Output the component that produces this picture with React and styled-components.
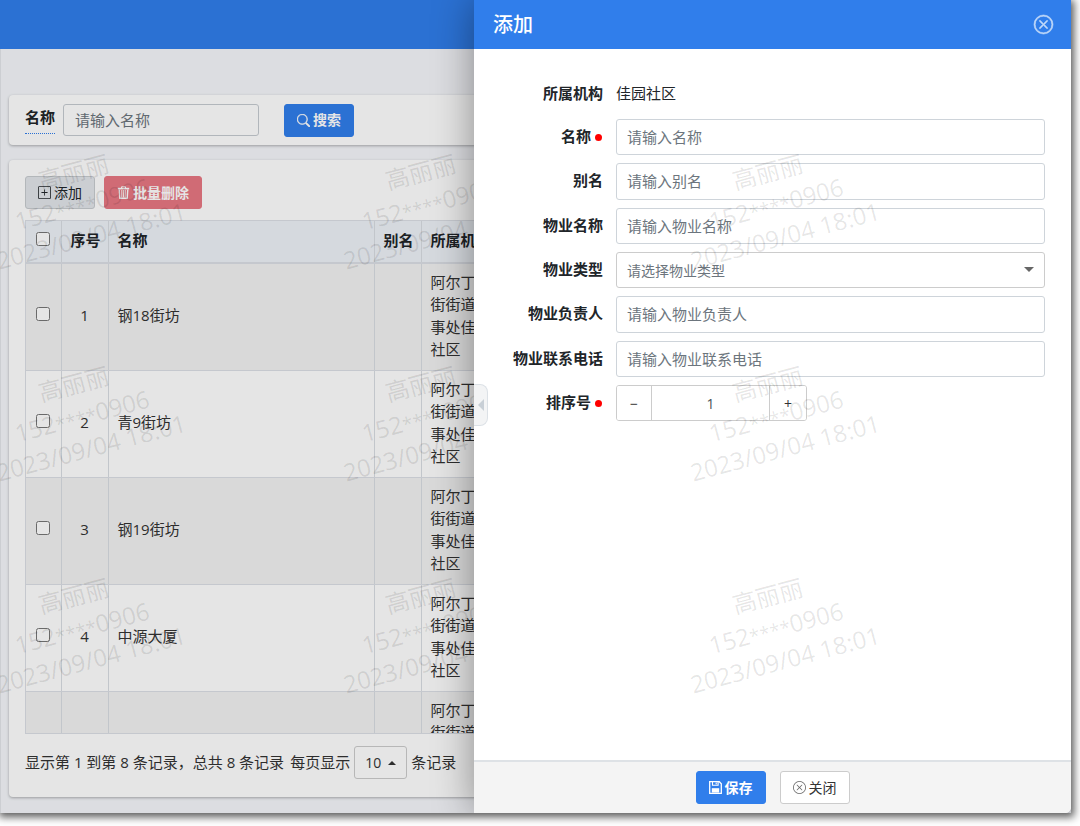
import React, { useState } from 'react';
import styled, { createGlobalStyle, css } from 'styled-components';
import { BsSearch, BsPlusSquare, BsXCircle } from 'react-icons/bs';

const Global = createGlobalStyle`
  * { box-sizing: border-box; }
  body {
    margin: 0;
    background: #fff;
    color: #212529;
    font: 15px/1.5 "Open Sans", "Noto Sans CJK SC", sans-serif;
  }
  button, input, select { font-family: inherit; margin: 0; }
`;

const Frame = styled.div`
  position: relative;
  display: flex;
  flex-direction: column;
  min-height: calc(100vh - 13px);
  margin: 0 9px 13px 0;
  overflow: hidden;
  background: #f5f7fb;
`;

const Shade = styled.div`
  display: flow-root;
  & > ${Frame} { box-shadow: 1px 2px 8px 2px rgba(0, 0, 0, 0.65); }
`;

const TopBar = styled.header`
  height: 49px;
  background: #307eeb;
`;

const Page = styled.main`
  flex: 1;
  display: flex;
  flex-direction: column;
  gap: 15px;
  padding: 46px 9px 16px 8px;
  border-left: 1px solid #e4e6ea;
`;

const Card = styled.section`
  background: #fff;
  border-radius: 4px;
  box-shadow: 0 1px 3px rgba(0, 0, 0, 0.3);
`;

const SearchCard = styled(Card)`
  display: flex;
  align-items: center;
  height: 50px;
  padding: 0 16px;
`;

const SearchLabel = styled.label`
  margin-right: 8px;
  padding-bottom: 4px;
  border-bottom: 1px dotted #307eeb;
  font-weight: 600;
`;

const fieldBox = css`
  border: 1px solid #ced4da;
  border-radius: 3px;
  background: #fff;
  color: #495057;
  font-size: 15px;
  line-height: 1.5;
  outline: none;
  &::placeholder { color: #6c757d; opacity: 1; }
`;

const SearchInput = styled.input`
  ${fieldBox}
  width: 196px;
  height: 32px;
  padding: 0 11px;
  margin-right: 25px;
  border-color: #c6cbd1;
`;

const variants = {
  primary: css`background: #307eeb; border-color: #307eeb; color: #fff; font-weight: 600;`,
  muted: css`background: #e2e6ea; border-color: #c8ccd0; color: #212529;`,
  danger: css`background: #e87883; border-color: #e87883; color: #fff; font-weight: 600;`,
  plain: css`background: #fff; border-color: #ccc; color: #333; svg { color: #666; }`,
};

const Button = styled.button`
  display: inline-flex;
  align-items: center;
  justify-content: center;
  gap: 3px;
  height: 33px;
  padding: 0 12px;
  border: 1px solid;
  border-radius: 3px;
  font-size: 14px;
  line-height: 20px;
  white-space: nowrap;
  ${(p) => variants[p.$variant]}
  svg { width: 13px; height: 13px; flex: none; }
`;

const ListCard = styled(Card)`
  flex: 1;
  display: flex;
  flex-direction: column;
  padding: 16px 16px 18px;
`;

const Toolbar = styled.div`
  display: flex;
  gap: 9px;
  margin-bottom: 11px;
`;

const TableWrap = styled.div`
  flex: 1 1 0;
  min-height: 0;
  overflow: hidden;
  border: 1px solid #dcdfe6;
`;

const Table = styled.table`
  width: 100%;
  border-collapse: collapse;
  table-layout: fixed;
  color: #333;
`;

const Th = styled.th`
  width: ${(p) => p.$w || 'auto'};
  padding: 8px 9px 10px;
  border-right: 1px solid #d9dde3;
  border-bottom: 2px solid #dcdfe6;
  background: #eef2f8;
  color: #212529;
  font-weight: 600;
  text-align: ${(p) => (p.$center ? 'center' : 'left')};
  white-space: nowrap;
`;

const Td = styled.td`
  padding: 7px 9px 9px;
  border-right: 1px solid #d9dde3;
  border-bottom: 1px solid #dcdfe6;
  text-align: ${(p) => (p.$center ? 'center' : 'left')};
`;

const Tr = styled.tr`
  &:nth-child(odd) { background: #f2f2f2; }
`;

const OrgLine = styled.div`
  white-space: nowrap;
`;

const Check = styled.input`
  display: block;
  width: 14px;
  height: 14px;
  && { margin: 0 auto 3px; }
`;

const Pager = styled.footer`
  display: flex;
  align-items: center;
  gap: 4px;
  margin-top: 12px;
  white-space: nowrap;
  color: #333;
`;

const Total = styled.span`
  margin-right: 2px;
`;

const PageSize = styled.button`
  display: flex;
  align-items: center;
  justify-content: center;
  gap: 7px;
  width: 53px;
  height: 33px;
  padding: 0;
  border: 1px solid #ccc;
  border-radius: 3px;
  background: #fff;
  color: #333;
  font-size: 14px;
`;

const CaretUp = styled.span`
  border: 4px solid transparent;
  border-top: 0;
  border-bottom-color: currentColor;
`;

const Backdrop = styled.div`
  position: absolute;
  inset: 0;
  background: rgba(0, 0, 0, 0.1);
`;

const Drawer = styled.aside`
  position: absolute;
  top: 0;
  right: 0;
  bottom: 0;
  left: 474px;
  display: flex;
  flex-direction: column;
  background: #fff;
  border-bottom-right-radius: 6px;
  box-shadow: 0 0 40px rgba(0, 0, 0, 0.4);
`;

const DrawerHead = styled.header`
  display: flex;
  align-items: center;
  justify-content: space-between;
  height: 49px;
  padding: 0 18px 0 19px;
  background: #307eeb;
  color: #fff;
`;

const Title = styled.h2`
  margin: 0;
  font-size: 20px;
  font-weight: 500;
  line-height: 28px;
`;

const CloseIcon = styled.button`
  display: flex;
  padding: 0;
  border: 0;
  background: none;
  color: #c3daf9;
  svg { width: 19px; height: 19px; stroke: currentColor; stroke-width: 0.5px; overflow: visible; }
`;

const Handle = styled.button`
  position: absolute;
  left: 0;
  top: 384px;
  display: flex;
  align-items: center;
  justify-content: center;
  width: 14px;
  height: 42px;
  padding: 0;
  border: 1px solid #dce1e6;
  border-left: 0;
  border-radius: 0 8px 8px 0;
  background: #f3f4f5;
`;

const CaretLeft = styled.span`
  border: 6px solid transparent;
  border-left: 0;
  border-right-color: #c8cfd6;
`;

const Form = styled.form`
  flex: 1;
  display: flex;
  flex-direction: column;
  gap: 8px;
  padding: 27px 26px 26px 0;
`;

const Row = styled.div`
  display: grid;
  grid-template-columns: 129px 1fr;
  column-gap: 13px;
  align-items: start;
`;

const Label = styled.label`
  display: flex;
  align-items: center;
  justify-content: flex-end;
  padding: 6px 0;
  font-weight: 600;
  white-space: nowrap;
`;

const Required = styled.i`
  width: 7px;
  height: 7px;
  margin: 3px 1px 0 4px;
  border-radius: 50%;
  background: #f00;
`;

const Value = styled.output`
  padding: 6px 0;
`;

const Field = styled.input`
  ${fieldBox}
  width: 100%;
  padding: 6px 10px;
`;

const SelectWrap = styled.div`
  position: relative;
`;

const Select = styled.select`
  ${fieldBox}
  appearance: none;
  display: block;
  width: 100%;
  height: 36px;
  padding: 0 30px 0 10px;
  border-color: #ccc;
  color: #6c757d;
  font-size: 14px;
`;

const CaretDown = styled.span`
  position: absolute;
  top: 15px;
  right: 11px;
  border: 5px solid transparent;
  border-bottom: 0;
  border-top-color: #666;
  pointer-events: none;
`;

const Stepper = styled.div`
  display: grid;
  grid-template-columns: 34px 1fr 36px;
  width: 191px;
  height: 36px;
  border: 1px solid #ccc;
  border-radius: 3px;
  overflow: hidden;
`;

const StepButton = styled.button`
  padding: 0;
  border: 0;
  background: #fff;
  color: #333;
  font-size: 14px;
`;

const StepValue = styled.input`
  width: 100%;
  min-width: 0;
  padding: 0;
  border: solid #ccc;
  border-width: 0 1px;
  color: #495057;
  font-size: 14px;
  text-align: center;
`;

const DrawerFoot = styled.footer`
  display: flex;
  justify-content: center;
  gap: 14px;
  padding: 9px 0;
  border-top: 2px solid #dee2e6;
  border-bottom-right-radius: 6px;
  background: #f4f4f4;
`;

const Marks = styled.div`
  position: absolute;
  top: 154px;
  left: ${(p) => p.$left};
  display: grid;
  grid-template-columns: repeat(${(p) => p.$columns}, 194px);
  gap: 113px 153px;
  pointer-events: none;
`;

const Mark = styled.div`
  transform: rotate(-15deg);
  color: rgba(0, 0, 0, 0.1);
  font-size: 24px;
  line-height: 33px;
  text-align: center;
  white-space: nowrap;
`;

const Stars = styled.span`
  font-size: 19px;
  line-height: 0;
`;

const org = ['阿尔丁', '街街道', '事处佳', '社区'];
const rows = [
  { no: 1, name: '钢18街坊' },
  { no: 2, name: '青9街坊' },
  { no: 3, name: '钢19街坊' },
  { no: 4, name: '中源大厦' },
];

function TrashIcon() {
  return (
    <svg viewBox="0 0 13 13" fill="none" stroke="currentColor" aria-hidden="true">
      <path d="M4.5 2V.8h4V2" />
      <path d="M.8 2.6h11.4" strokeWidth="1.6" />
      <path d="M2.2 3.5l.6 8.7h7.4l.6-8.7" strokeWidth="1.4" />
      <path d="M4.8 4v7.5M6.5 4v7.5M8.2 4v7.5" strokeWidth=".9" />
    </svg>
  );
}

function SaveIcon() {
  return (
    <svg viewBox="0 0 13 13" fill="none" stroke="currentColor" aria-hidden="true">
      <path d="M.7.7h9.6l2 2v9.6H.7z" strokeWidth="1.3" />
      <path d="M3.5.7v3.6h5.6V.7M7.2 1.5v1.7" strokeWidth="1.1" />
      <path d="M2.8 7.2h7.4v4.4H2.8z" fill="currentColor" stroke="none" />
    </svg>
  );
}

function Watermarks({ columns, left }) {
  return (
    <Marks $columns={columns} $left={left} aria-hidden="true">
      {Array.from({ length: columns * 3 }, (_, i) => (
        <Mark key={i}>
          <div>高丽丽</div>
          <div>152<Stars>****</Stars>0906</div>
          <div>2023/09/04 18:01</div>
        </Mark>
      ))}
    </Marks>
  );
}

function TextRow({ id, label, required }) {
  return (
    <Row>
      <Label htmlFor={id}>{label}{required && <Required />}</Label>
      <Field id={id} placeholder={`请输入${label}`} />
    </Row>
  );
}

export default function App() {
  const [order, setOrder] = useState(1);
  return (
    <Shade>
      <Global />
      <Frame>
        <TopBar />
        <Page>
          <SearchCard>
            <SearchLabel htmlFor="q">名称</SearchLabel>
            <SearchInput id="q" placeholder="请输入名称" />
            <Button $variant="primary"><BsSearch strokeWidth="0.5" />搜索</Button>
          </SearchCard>
          <ListCard>
            <Toolbar>
              <Button $variant="muted"><BsPlusSquare />添加</Button>
              <Button $variant="danger"><TrashIcon />批量删除</Button>
            </Toolbar>
            <TableWrap>
              <Table>
                <thead>
                  <tr>
                    <Th $w="35px"><Check type="checkbox" aria-label="全选" /></Th>
                    <Th $w="47px" $center>序号</Th>
                    <Th $w="266px">名称</Th>
                    <Th $w="47px" $center>别名</Th>
                    <Th>所属机构</Th>
                  </tr>
                </thead>
                <tbody>
                  {rows.map((r) => (
                    <Tr key={r.no}>
                      <Td><Check type="checkbox" aria-label={r.name} /></Td>
                      <Td $center>{r.no}</Td>
                      <Td>{r.name}</Td>
                      <Td />
                      <Td>{org.map((t) => <OrgLine key={t}>{t}</OrgLine>)}</Td>
                    </Tr>
                  ))}
                  <Tr>
                    <Td /><Td /><Td /><Td />
                    <Td>{org.slice(0, 2).map((t) => <OrgLine key={t}>{t}</OrgLine>)}</Td>
                  </Tr>
                </tbody>
              </Table>
            </TableWrap>
            <Pager>
              <Total>显示第 1 到第 8 条记录，总共 8 条记录</Total>
              <span>每页显示</span>
              <PageSize>10<CaretUp /></PageSize>
              <span>条记录</span>
            </Pager>
          </ListCard>
        </Page>
        <Backdrop />
        <Watermarks columns={2} left="-15px" />
        <Drawer>
          <DrawerHead>
            <Title>添加</Title>
            <CloseIcon aria-label="关闭"><BsXCircle /></CloseIcon>
          </DrawerHead>
          <Form id="add" onSubmit={(e) => e.preventDefault()}>
            <Row>
              <Label htmlFor="org">所属机构</Label>
              <Value id="org">佳园社区</Value>
            </Row>
            <TextRow id="name" label="名称" required />
            <TextRow id="alias" label="别名" />
            <TextRow id="property" label="物业名称" />
            <Row>
              <Label htmlFor="type">物业类型</Label>
              <SelectWrap>
                <Select id="type"><option>请选择物业类型</option></Select>
                <CaretDown />
              </SelectWrap>
            </Row>
            <TextRow id="owner" label="物业负责人" />
            <TextRow id="phone" label="物业联系电话" />
            <Row>
              <Label htmlFor="order">排序号<Required /></Label>
              <Stepper>
                <StepButton type="button" onClick={() => setOrder(order - 1)}>−</StepButton>
                <StepValue id="order" value={order} onChange={(e) => setOrder(Number(e.target.value) || 0)} />
                <StepButton type="button" onClick={() => setOrder(order + 1)}>+</StepButton>
              </Stepper>
            </Row>
          </Form>
          <DrawerFoot>
            <Button $variant="primary" form="add"><SaveIcon />保存</Button>
            <Button $variant="plain"><BsXCircle />关闭</Button>
          </DrawerFoot>
          <Handle aria-label="展开"><CaretLeft /></Handle>
          <Watermarks columns={1} left="205px" />
        </Drawer>
      </Frame>
    </Shade>
  );
}
